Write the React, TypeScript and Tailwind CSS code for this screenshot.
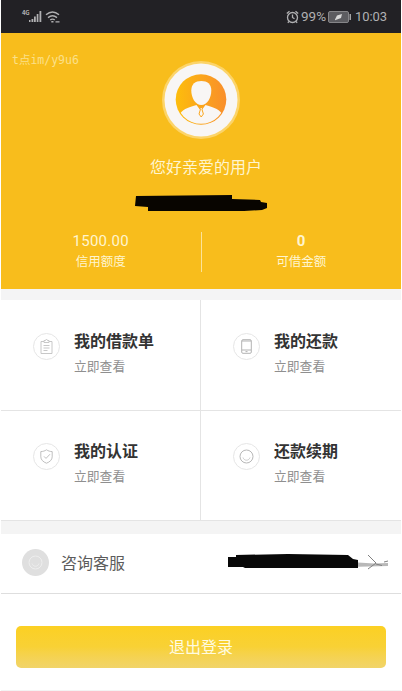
import { ReactNode } from 'react';

const menuItems = [
  { title: '我的借款单', icon: <BillIcon /> },
  { title: '我的还款', icon: <PhoneIcon /> },
  { title: '我的认证', icon: <ShieldIcon /> },
  { title: '还款续期', icon: <SmileIcon /> },
];

function BillIcon() {
  return (
    <svg width="13" height="16" viewBox="0 0 13 16" fill="none" stroke="#c2c2c2" strokeWidth="0.9">
      <path d="M4 2.5H1v12h11v-12H9" />
      <path d="M4 3.5v-2h1.5a1 1 0 0 1 2 0H9v2z" />
      <path d="M3.5 6.5h6M3.5 9h6M3.5 11.5h4" />
    </svg>
  );
}

function PhoneIcon() {
  return (
    <svg width="11" height="15" viewBox="0 0 11 15" fill="none" stroke="#aaa" strokeWidth="0.9">
      <rect x="0.7" y="0.7" width="9.6" height="13.6" rx="1.2" />
      <path d="M1 2h9M1 11h9" />
      <path d="M4.5 12.6h2" />
    </svg>
  );
}

function ShieldIcon() {
  return (
    <svg width="13" height="15" viewBox="0 0 13 15" fill="none" stroke="#b8b8b8" strokeWidth="0.9">
      <path d="M6.5 0.8C4.8 2 3 2.5 0.8 2.6v5.2c0 3 2.5 5.2 5.7 6.4 3.2-1.2 5.7-3.4 5.7-6.4V2.6C10 2.5 8.2 2 6.5 0.8z" />
      <path d="M4 7.4l2 2 4-4.2" />
    </svg>
  );
}

function SmileIcon() {
  return (
    <svg width="15" height="15" viewBox="0 0 15 15" fill="none" stroke="#b8b8b8" strokeWidth="1">
      <circle cx="7.5" cy="7.5" r="6.5" />
      <path d="M4 8.5c.6 1.8 1.9 2.7 3.5 2.7s2.9-.9 3.5-2.7" strokeWidth="0.7" />
    </svg>
  );
}

function StatusBar() {
  return (
    <div className="flex h-[33px] items-center justify-between bg-[#222125] pl-[21px] pr-[14px] text-[#b0b0b2]">
      <div className="flex items-center">
        <span className="-mt-2 w-[6px] text-[6px] font-bold leading-none tracking-tighter">4G</span>
        <svg width="14" height="13" viewBox="0 0 14 13" fill="currentColor">
          <path d="M1 10h1.5v2H1zM3.500 9h1.8v3H3.500zM6 6.500h1.8V12H6zM8.700 4h1.7v8H8.700zM11.500 1h1.8v11h-1.8z" />
        </svg>
        <svg className="ml-[3px]" width="16" height="14" viewBox="0 0 16 14" fill="none" stroke="currentColor" strokeWidth="1.4">
          <path d="M1 4.8Q7.5-.8 14 4.8M3 7.6q4.5-3.6 9 0M5.2 10q2.3-1.8 4.6 0" />
          <path d="M6.3 11.7h2.2M10.5 11.9h4" />
        </svg>
      </div>
      <div className="flex items-center font-[Roboto,sans-serif]">
        <svg width="13" height="14" viewBox="0 0 13 14" fill="none" stroke="currentColor" strokeWidth="1.3">
          <circle cx="6.5" cy="7.5" r="5" />
          <path d="M6.5 4.5v3l2 1.3M.8 3.5L3.5 1.2M12.2 3.5L9.5 1.2M3 11.5l-1.2 1.3M10 11.5l1.2 1.3" />
        </svg>
        <span className="ml-[2px] w-[26px] whitespace-nowrap text-[13.5px]">99%</span>
        <svg className="ml-[1px]" width="23" height="12" viewBox="0 0 23 12">
          <rect x="0.5" y="0.5" width="20" height="11" rx="1.5" fill="#5c5c60" stroke="#858588" />
          <path d="M21.5 3H23v6h-1.5z" fill="#a3a3a5" />
          <path d="M7 8.500L9 4.500l5-1.500-1 4-4 1.500-2 .8z" fill="#d8d8d8" />
        </svg>
        <span className="ml-[4px] w-[32px] whitespace-nowrap text-[13px] tracking-[-0.1px]">10:03</span>
      </div>
    </div>
  );
}

function Avatar() {
  return (
    <svg width="80" height="80" viewBox="0 0 80 80">
      <defs>
        <linearGradient id="face" x1="0" y1="0" x2="1" y2="0">
          <stop offset="0" stopColor="#fdbd0c" />
          <stop offset="1" stopColor="#f98e2b" />
        </linearGradient>
        <clipPath id="disc">
          <circle cx="40" cy="39.5" r="24.3" />
        </clipPath>
      </defs>
      <circle cx="40" cy="40" r="39" fill="#fcd469" />
      <circle cx="40" cy="40" r="36.5" fill="#f8f6f5" />
      <circle cx="40" cy="39.5" r="25.3" fill="url(#face)" />
      <path clipPath="url(#disc)" fill="#f8f6f5" d="M18 66V55c3-5 8-7.5 17.5-10l4.5 6 4.5-6C54 47.5 59 50 62 55v11z" />
      <path d="M38.8 47.5h2.800l-.6 2 1.400 4.500-2.200 3-2.200-3 1.400-4.500z" fill="#f8f6f5" stroke="#fba71d" strokeWidth="1" />
      <path d="M30.3 30.5c0-6.500 4-9.500 10-9.500s10 3 10 9.500c0 7-4 14.500-10 14.500s-10-7.500-10-14.500z" fill="#f8f6f5" />
    </svg>
  );
}

function Quota({ value, label, bold }: { value: string; label: string; bold?: boolean }) {
  return (
    <div className="-mt-px flex flex-1 flex-col items-center text-[#fff5cf]">
      <span className={`h-[19px] font-[Roboto,sans-serif] text-[15px] leading-[19px] tracking-[0.3px] ${bold ? 'font-bold' : ''}`}>
        {value}
      </span>
      <span className="text-[12.5px] leading-[20px]">{label}</span>
    </div>
  );
}

function MenuCell({ title, icon, index }: { title: string; icon: ReactNode; index: number }) {
  return (
    <div
      className={`flex border-b border-[#e4e4e4] pl-8 ${index % 2 === 0 ? 'border-r' : ''} ${
        index > 1 ? 'pt-[26px]' : 'pt-[27px]'
      }`}
    >
      <div className="mt-[6px] flex h-[27px] w-[27px] items-center justify-center rounded-full border border-[#e6e6e6]">
        {icon}
      </div>
      <div className="ml-[14px] mt-px">
        <h3 className="text-[16px] font-bold leading-[24px] text-[#333]">{title}</h3>
        <p className="mt-[4px] text-[12.8px] leading-[20px] text-[#8f8f8f]">立即查看</p>
      </div>
    </div>
  );
}

export default function App() {
  return (
    <div className="h-[691px] w-[402px] overflow-hidden bg-white px-px font-['Noto_Sans_CJK_SC',sans-serif]">
      <StatusBar />

      {/* Profile header */}
      <header className="relative flex h-[256px] flex-col items-center bg-[#f8bd1c]">
        <span className="absolute left-[11px] top-[18px] whitespace-nowrap font-['DejaVu_Sans_Mono','Noto_Sans_CJK_SC',monospace] text-[11.5px] leading-[18px] text-[#fbe08a]">
          t点im/y9u6
        </span>
        <div className="mt-[27px]">
          <Avatar />
        </div>
        <p className="mt-[14px] pl-[10px] text-[16px] leading-[24px] text-[#fff5cf]">您好亲爱的用户</p>
        <svg className="mt-[14px]" width="136" height="20" viewBox="0 0 136 20">
          <path d="M3 4L99 3v4l28 1 1 2 6 1v5l-5 2-18 1H15v-4L2 14z" fill="#080500" />
        </svg>
        <div className="mt-[20px] flex h-[40px] w-full items-center">
          <Quota value="1500.00" label="信用额度" />
          <div className="h-[40px] w-px bg-[#fce39a]" />
          <Quota value="0" label="可借金额" bold />
        </div>
      </header>

      <div className="h-[11px] bg-[#f4f4f5]" />

      <section className="grid h-[221px] grid-cols-2 grid-rows-[111px_110px]">
        {menuItems.map((item, index) => (
          <MenuCell key={item.title} title={item.title} icon={item.icon} index={index} />
        ))}
      </section>

      <div className="h-[13px] bg-[#f4f4f4]" />

      {/* Customer service */}
      <div className="flex h-[60px] items-center border-b border-[#dedede] pb-[2px] pl-[21px] pr-[12px]">
        <div className="flex h-[27px] w-[27px] items-center justify-center rounded-full bg-[#dfdfdf]">
          <svg width="15" height="15" viewBox="0 0 15 15" fill="none" stroke="#eee" strokeWidth="1">
            <circle cx="7.5" cy="7.5" r="6.5" />
            <path d="M4 8.5c.6 1.8 1.9 2.7 3.5 2.7s2.9-.9 3.5-2.7" />
          </svg>
        </div>
        <span className="-mt-[2px] ml-[12px] flex-1 text-[16px] text-[#5c5c5c]">咨询客服</span>
        <svg className="-mt-[2px]" width="162" height="20" viewBox="0 0 162 20">
          <path d="M131 10.5l16 1 14-.5v3l-30 .8z" fill="#b8b8b8" />
          <path d="M1 5h8V3l52-1 60 1 5 4 5 1v8H18l-2-1H1z" fill="#080808" />
          <path d="M141 3l8 8-8 6M149 12l6 1.5M157 10l4-1" fill="none" stroke="#808080" strokeWidth="1" />
        </svg>
      </div>

      <button className="ml-[15px] mt-[32px] block h-[42px] w-[370px] rounded-[5px] bg-gradient-to-b from-[#fcd022] via-[#f8d135] to-[#f1d469] pb-[3px] text-[16px] text-[#fffbe0]">
        退出登录
      </button>
      <div className="mt-[22px] h-px bg-[#f3f3f3]" />
    </div>
  );
}
